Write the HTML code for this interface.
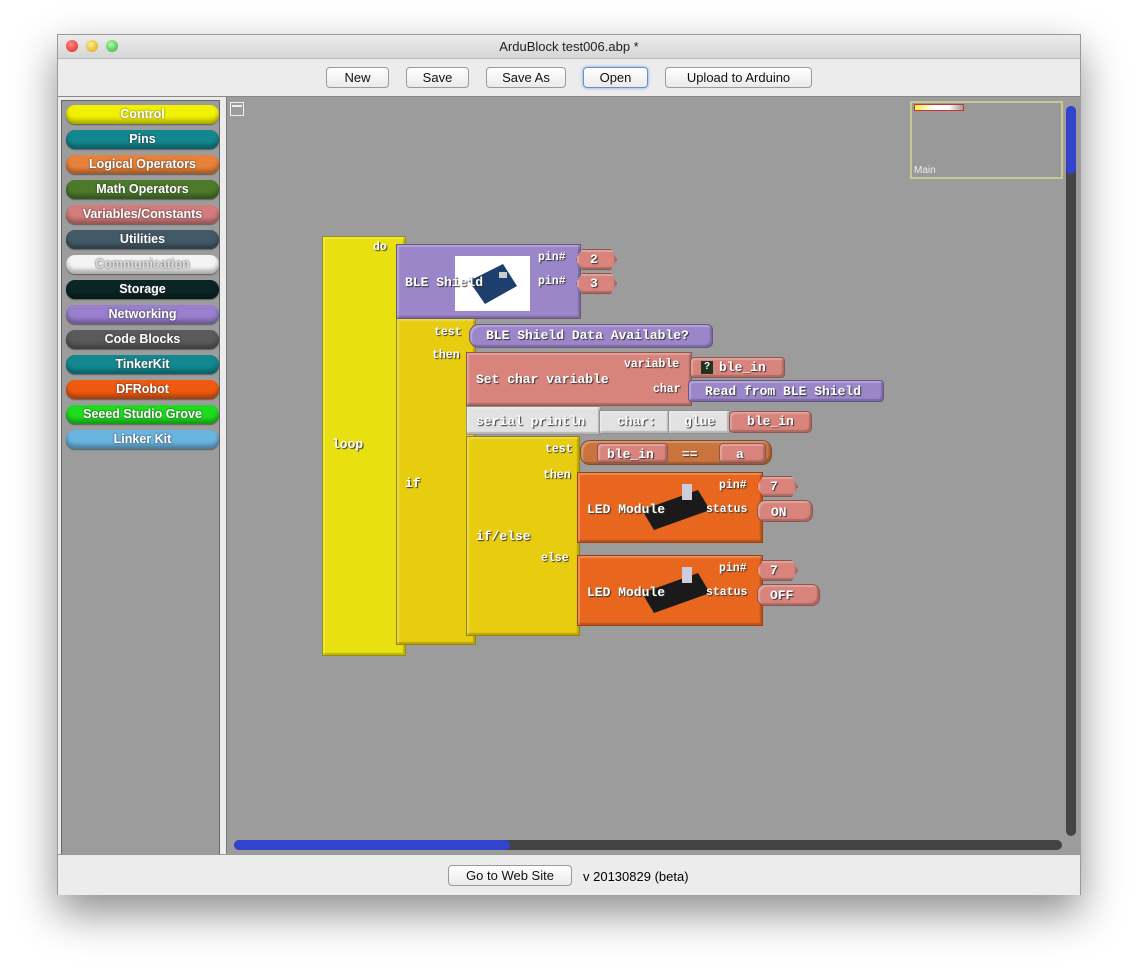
<!DOCTYPE html>
<html><head><meta charset="utf-8"><style>
*{box-sizing:border-box;margin:0;padding:0}
body{width:1138px;height:974px;background:#fff;position:relative;overflow:hidden;font-family:"Liberation Sans",sans-serif}
.win{position:absolute;left:57px;top:34px;width:1024px;height:861px;background:#ececec;box-shadow:0 18px 40px rgba(0,0,0,.45);border:1px solid #999}
.title{position:absolute;left:0;top:0;width:100%;height:23px;background:linear-gradient(#ececec,#d6d6d6);text-align:center;font-size:13px;line-height:23px;color:#222}
.dot{position:absolute;top:5px;width:12px;height:12px;border-radius:50%}
.tb{position:absolute;left:0;top:23px;width:100%;height:39px;background:#ececec;border-top:1px solid #bbb;border-bottom:1px solid #888}
.btn{position:absolute;top:8px;height:21px;border:1px solid #9a9a9a;border-radius:4px;background:linear-gradient(#fff,#eaeaea);font-size:13px;text-align:center;line-height:19px;color:#111}
.side{position:absolute;left:3px;top:65px;width:159px;height:756px;background:#9c9c9c;border:1px solid #666}
.cat{position:absolute;left:4px;width:153px;height:19px;border-radius:9px;font-size:12.5px;font-weight:bold;color:#fff;text-align:center;line-height:18px;text-shadow:0 0 2px #333;box-shadow:inset 0 -4px 4px rgba(0,0,0,.3),0 1px 1px rgba(0,0,0,.4)}
.canvas{position:absolute;left:168px;top:62px;width:855px;height:757px;background:#9c9c9c;border-left:1px solid #777}
.foot{position:absolute;left:0;top:819px;width:100%;height:41px;background:#ececec;border-top:1px solid #999}
.b{position:absolute;font-family:"Liberation Mono",monospace;font-weight:bold;color:#fff;text-shadow:1px 1px 1px #333,0 0 1px #333;font-size:13px}
.blk{position:absolute;border:1px solid rgba(0,0,0,.35);box-shadow:inset 2px 2px 1px rgba(255,255,255,.25),inset -2px -2px 1px rgba(0,0,0,.2)}
.lbl{position:absolute;font-family:"Liberation Mono",monospace;font-weight:bold;color:#fff;text-shadow:1px 1px 1px #333;font-size:13px;white-space:nowrap}
.sm{font-size:11.5px}
</style></head><body>
<div class="win">
 <div class="title">ArduBlock test006.abp *
  <div class="dot" style="left:8px;background:radial-gradient(circle at 40% 35%,#f88,#d22)"></div>
  <div class="dot" style="left:28px;background:radial-gradient(circle at 40% 35%,#fe8,#d9a010)"></div>
  <div class="dot" style="left:48px;background:radial-gradient(circle at 40% 35%,#afa,#3a3)"></div>
 </div>
 <div class="tb">
  <div class="btn" style="left:268px;width:63px">New</div>
  <div class="btn" style="left:348px;width:63px">Save</div>
  <div class="btn" style="left:428px;width:80px">Save As</div>
  <div class="btn" style="left:525px;width:65px;border-color:#6a8fc8;box-shadow:0 0 3px #7aa0e0">Open</div>
  <div class="btn" style="left:607px;width:147px">Upload to Arduino</div>
 </div>
 <div class="side">
  <div class="cat" style="top:4px;background:#f2f200;color:#fff;text-shadow:0 0 2px #555">Control</div>
  <div class="cat" style="top:29px;background:#13878f">Pins</div>
  <div class="cat" style="top:54px;background:#e8823a">Logical Operators</div>
  <div class="cat" style="top:79px;background:#4c7a2a">Math Operators</div>
  <div class="cat" style="top:104px;background:#d47c7c">Variables/Constants</div>
  <div class="cat" style="top:129px;background:#425a68">Utilities</div>
  <div class="cat" style="top:154px;background:#f4f4f4;color:#ddd">Communication</div>
  <div class="cat" style="top:179px;background:#0a2624">Storage</div>
  <div class="cat" style="top:204px;background:#9a7fcf">Networking</div>
  <div class="cat" style="top:229px;background:#5a5a5a">Code Blocks</div>
  <div class="cat" style="top:254px;background:#138890">TinkerKit</div>
  <div class="cat" style="top:279px;background:#f05a10">DFRobot</div>
  <div class="cat" style="top:304px;background:#1edc1e">Seeed Studio Grove</div>
  <div class="cat" style="top:329px;background:#6ab4e0">Linker Kit</div>
 </div>
 <div class="canvas">
  <div style="position:absolute;left:3px;top:5px;width:14px;height:14px;border:1px solid #eee"><div style="border-top:2px solid #eee;margin:2px 1px"></div></div>
  <div style="position:absolute;left:683px;top:4px;width:153px;height:78px;background:#999;border:2px solid #c8c890"><div style="position:absolute;left:2px;top:1px;width:50px;height:7px;border:1px solid #c33;background:linear-gradient(90deg,#ee4,#fff 40%,#fff 70%,#999)"></div><span style="position:absolute;left:2px;bottom:1px;font-size:10px;color:#eee">Main</span></div>
  <div style="position:absolute;left:839px;top:9px;width:10px;height:730px;background:#444;border-radius:5px"><div style="height:68px;background:#3344cc;border-radius:5px"></div></div>
  <div style="position:absolute;left:7px;top:743px;width:828px;height:10px;background:#444;border-radius:5px"><div style="width:276px;height:10px;background:#3344cc;border-radius:5px"></div></div>
 </div>
 <div class="foot">
  <div class="btn" style="left:390px;width:124px;top:10px">Go to Web Site</div>
  <div style="position:absolute;left:525px;top:14px;font-size:13px">v 20130829 (beta)</div>
 </div>
</div>

<!-- blocks (absolute page coords) -->
<div class="blk" style="left:322px;top:236px;width:84px;height:420px;background:#e8e010"></div>
<div class="lbl sm" style="left:373px;top:241px">do</div>
<div class="lbl" style="left:332px;top:437px">loop</div>

<div class="blk" style="left:396px;top:318px;width:80px;height:327px;background:#e8cc10"></div>
<div class="lbl sm" style="left:434px;top:326px">test</div>
<div class="lbl sm" style="left:432px;top:349px">then</div>
<div class="lbl" style="left:405px;top:476px">if</div>

<div class="blk" style="left:396px;top:244px;width:185px;height:75px;background:#9a86c8"></div>
<div style="position:absolute;left:455px;top:256px;width:75px;height:55px;background:#fff"><svg width="75" height="55"><polygon points="14,25 48,8 62,30 30,48" fill="#1d3f6e"/><rect x="44" y="16" width="8" height="6" fill="#ccc"/></svg></div>
<div class="lbl" style="left:405px;top:275px">BLE Shield</div>
<div class="lbl sm" style="left:538px;top:251px">pin#</div>
<div class="lbl sm" style="left:538px;top:275px">pin#</div>
<div class="blk" style="left:576px;top:249px;width:41px;height:21px;background:#d8847c;clip-path:polygon(15% 0,85% 0,100% 50%,85% 100%,15% 100%,0 50%)"></div>
<div class="lbl" style="left:590px;top:252px">2</div>
<div class="blk" style="left:576px;top:273px;width:41px;height:21px;background:#d8847c;clip-path:polygon(15% 0,85% 0,100% 50%,85% 100%,15% 100%,0 50%)"></div>
<div class="lbl" style="left:590px;top:276px">3</div>

<div class="blk" style="left:469px;top:324px;width:244px;height:24px;background:#9a86c8;border-radius:10px 6px 6px 10px"></div>
<div class="lbl" style="left:486px;top:328px">BLE Shield Data Available?</div>

<div class="blk" style="left:466px;top:352px;width:226px;height:54px;background:#d8847c"></div>
<div class="lbl" style="left:476px;top:372px">Set char variable</div>
<div class="lbl sm" style="left:624px;top:358px">variable</div>
<div class="lbl sm" style="left:653px;top:383px">char</div>
<div class="blk" style="left:690px;top:357px;width:95px;height:21px;background:#d8847c;border-radius:4px"></div>
<div style="position:absolute;left:701px;top:361px;width:12px;height:13px;background:#223322;color:#fff;font-size:10px;text-align:center;font-weight:bold">?</div>
<div class="lbl" style="left:719px;top:360px">ble_in</div>
<div class="blk" style="left:688px;top:380px;width:196px;height:22px;background:#9a86c8;border-radius:4px"></div>
<div class="lbl" style="left:705px;top:384px">Read from BLE Shield</div>

<div class="blk" style="left:466px;top:406px;width:135px;height:29px;background:#e2e2e2"></div>
<div class="lbl" style="left:476px;top:414px">serial println</div>
<div class="blk" style="left:599px;top:410px;width:71px;height:24px;background:#e2e2e2"></div>
<div class="lbl" style="left:617px;top:414px">char:</div>
<div class="blk" style="left:668px;top:410px;width:62px;height:24px;background:#e2e2e2"></div>
<div class="lbl" style="left:684px;top:414px">glue</div>
<div class="blk" style="left:729px;top:411px;width:83px;height:22px;background:#d8847c;border-radius:5px"></div>
<div class="lbl" style="left:747px;top:414px">ble_in</div>

<div class="blk" style="left:466px;top:436px;width:114px;height:200px;background:#e8cc10"></div>
<div class="lbl sm" style="left:545px;top:443px">test</div>
<div class="lbl sm" style="left:543px;top:469px">then</div>
<div class="lbl sm" style="left:541px;top:552px">else</div>
<div class="lbl" style="left:476px;top:529px">if/else</div>
<div class="blk" style="left:580px;top:440px;width:192px;height:25px;background:#c8743c;border-radius:10px"></div>
<div class="blk" style="left:597px;top:443px;width:71px;height:20px;background:#d8847c;border-radius:4px"></div>
<div class="lbl" style="left:607px;top:447px">ble_in</div>
<div class="lbl" style="left:682px;top:447px">==</div>
<div class="blk" style="left:719px;top:443px;width:47px;height:20px;background:#d8847c;border-radius:4px"></div>
<div class="lbl" style="left:736px;top:447px">a</div>

<div class="blk" style="left:577px;top:472px;width:186px;height:71px;background:#e8661e"></div>
<svg style="position:absolute;left:640px;top:480px" width="75" height="55"><polygon points="2,30 58,10 70,30 14,50" fill="#1a1a1a"/><rect x="42" y="4" width="10" height="16" fill="#ccd"/></svg>
<div class="lbl" style="left:587px;top:502px">LED Module</div>
<div class="lbl sm" style="left:706px;top:503px">status</div>
<div class="lbl sm" style="left:719px;top:479px">pin#</div>
<div class="blk" style="left:757px;top:476px;width:41px;height:21px;background:#d8847c;clip-path:polygon(15% 0,85% 0,100% 50%,85% 100%,15% 100%,0 50%)"></div>
<div class="lbl" style="left:770px;top:479px">7</div>
<div class="blk" style="left:757px;top:500px;width:56px;height:22px;background:#d8847c;border-radius:8px"></div>
<div class="lbl" style="left:771px;top:505px">ON</div>

<div class="blk" style="left:577px;top:555px;width:186px;height:71px;background:#e8661e"></div>
<svg style="position:absolute;left:640px;top:563px" width="75" height="55"><polygon points="2,30 58,10 70,30 14,50" fill="#1a1a1a"/><rect x="42" y="4" width="10" height="16" fill="#ccd"/></svg>
<div class="lbl" style="left:587px;top:585px">LED Module</div>
<div class="lbl sm" style="left:706px;top:586px">status</div>
<div class="lbl sm" style="left:719px;top:562px">pin#</div>
<div class="blk" style="left:757px;top:560px;width:41px;height:21px;background:#d8847c;clip-path:polygon(15% 0,85% 0,100% 50%,85% 100%,15% 100%,0 50%)"></div>
<div class="lbl" style="left:770px;top:563px">7</div>
<div class="blk" style="left:757px;top:584px;width:63px;height:22px;background:#d8847c;border-radius:8px"></div>
<div class="lbl" style="left:770px;top:588px">OFF</div>
</body></html>
